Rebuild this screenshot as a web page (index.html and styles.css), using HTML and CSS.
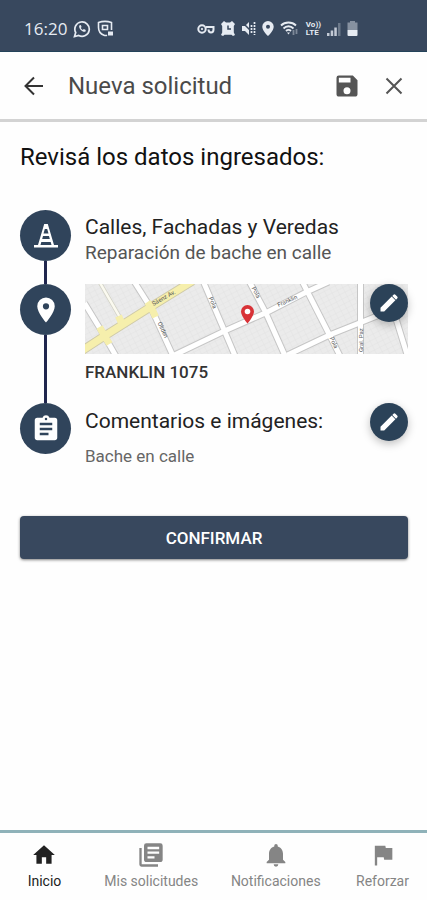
FILE: index.html
```html
<!DOCTYPE html>
<html lang="es">
<head>
<meta charset="utf-8">
<meta name="viewport" content="width=device-width, initial-scale=1">
<title>Nueva solicitud</title>
<link rel="stylesheet" href="styles.css">
</head>
<body>
<div class="status">
  <div class="status-left">
    <span class="clock">16:20</span>
    <svg width="18" height="18" viewBox="0 0 18 18" fill="none" stroke="currentColor" stroke-width="1.7"><path d="M1.5 16.5l1.2-4A7.2 7.2 0 1 1 5.700 15.500z"/><path d="M6.200 5.500c-.8 3 3.300 7 6.200 6.200l.4-1.600-2-1-1 .9c-1-.5-1.600-1.200-2-2l.8-1-.8-1.900z" fill="currentColor" stroke="none"/></svg>
    <svg width="17" height="17" viewBox="0 0 17 17" fill="none" stroke="currentColor" stroke-width="1.600"><path d="M10 15.200c-1 .4-2 .4-3 0C3 13.800 1.500 11.500 1.500 7.500V2.500C6 1 10 1 14.500 2.500V10"/><path d="M5.500 5.500h5v4h-5z"/><path d="M11 11.500h5v4h-5z" fill="currentColor" stroke="none"/></svg>
  </div>
  <div class="status-right">
    <svg width="18" height="14" viewBox="0 0 18 14" fill="none" stroke="currentColor" stroke-width="2"><circle cx="5" cy="7" r="3.700"/><path d="M9 5h7.500v2.500c0 4-5 4-5 0"/><circle cx="5" cy="7" r=".7" fill="currentColor" stroke-width="1"/></svg>
    <svg width="14" height="15" viewBox="0 0 14 15"><path d="M0 3l3-3 2 1.500h4L11 0l3 3-1.200 2v6.500L14 14l-2 1-1.500-1.200h-7L2 15l-2-1 1.200-2.500V5z" fill="currentColor"/><path d="M7 4.500v3.500h3" stroke="#38485e" stroke-width="1.500" fill="none"/></svg>
    <svg width="15" height="15" viewBox="0 0 15 15" fill="none" stroke="currentColor"><path d="M1 5h3l4-4v13l-4-4H1z" fill="currentColor" stroke="none"/><path d="M1 1l13 13" stroke="#38485e" stroke-width="1.500"/><path d="M10.500 4v8M13.500 1v13" stroke-width="1.700" stroke-dasharray="2 1"/></svg>
    <svg width="12" height="15" viewBox="0 0 12 15"><path d="M6 0a5.700 5.700 0 0 0-5.700 5.700C.3 9.800 6 15 6 15s5.700-5.200 5.700-9.300A5.700 5.700 0 0 0 6 0zm0 3.700a2 2 0 1 1 0 4 2 2 0 0 1 0-4z" fill="currentColor"/></svg>
    <svg width="20" height="15" viewBox="0 0 20 15" fill="none" stroke="currentColor" stroke-width="1.800"><path d="M1 4.500C5 .5 12 .5 16 4.500M3.500 7.500c3-3 7-3 10 0M6 10c1.500-1.500 3.500-1.500 5 0"/><path d="M7 11.500h3l-1.500 2z" fill="currentColor" stroke="none"/><path d="M13.500 9v5M16.500 8v5" opacity=".4"/></svg>
    <span class="lte"><span>Vo))</span><span>LTE</span></span>
    <svg width="14" height="14" viewBox="0 0 14 14" fill="currentColor"><path d="M0 11h2.500v3H0zM3.700 8.500h2.500V14H3.700zM7.300 5.500h2.500V14H7.300z" opacity=".8"/><path d="M11 1h2.500v13H11z" opacity=".3"/></svg>
    <svg width="11" height="15" viewBox="0 0 11 15" fill="currentColor"><path d="M3 0h5v1.500h2.500V9H.5V1.500H3z" opacity=".45"/><path d="M.5 9h10v5a1 1 0 0 1-1 1h-8a1 1 0 0 1-1-1z"/></svg>
  </div>
</div>

<header class="appbar">
  <button class="icon-btn back" aria-label="Volver"><svg width="20" height="20" viewBox="0 0 20 20" fill="none" stroke="currentColor" stroke-width="2"><path d="M19 10H2M10 1.500L1.500 10l8.500 8.500"/></svg></button>
  <h1>Nueva solicitud</h1>
  <button class="icon-btn" aria-label="Guardar"><svg width="28" height="28" viewBox="0 0 24 24" fill="currentColor"><path d="M17 3H5a2 2 0 0 0-2 2v14c0 1.100.9 2 2 2h14c1.100 0 2-.9 2-2V7l-4-4zm-5 16a3 3 0 1 1 0-6 3 3 0 0 1 0 6zm3-10H5V5h10v4z"/></svg></button>
  <button class="icon-btn" aria-label="Cerrar"><svg width="18" height="18" viewBox="0 0 18 18" fill="none" stroke="currentColor" stroke-width="2"><path d="M1.500 1.500l15 15M16.500 1.500l-15 15"/></svg></button>
</header>

<main>
  <h2>Revisá los datos ingresados:</h2>
  <ol class="steps">
    <li>
      <div class="rail"><span class="dot"><svg width="26" height="26" viewBox="0 0 26 26"><path d="M11.200 1h3.600l6.200 21h4v2.500H1V22h4z" fill="currentColor"/><path d="M11.800 6h2.400l1.300 4.500h-5zM10 13h6l.8 3H9.200zM8.300 19h9.400l.8 3h-11z" fill="#30445b"/></svg></span></div>
      <div class="info first">
        <h3>Calles, Fachadas y Veredas</h3>
        <p class="sub">Reparación de bache en calle</p>
      </div>
    </li>
    <li>
      <div class="rail"><span class="dot"><svg width="30" height="30" viewBox="0 0 24 24" fill="currentColor"><path d="M12 2a7 7 0 0 0-7 7c0 5.250 7 13 7 13s7-7.750 7-13a7 7 0 0 0-7-7zm0 9.500a2.500 2.500 0 1 1 0-5 2.500 2.500 0 0 1 0 5z"/></svg></span></div>
      <div class="info">
        <svg class="map" viewBox="0 0 324 70" preserveAspectRatio="xMidYMid slice" role="img" aria-label="Mapa">
          <defs>
            <pattern id="lots" width="6" height="5" patternUnits="userSpaceOnUse" patternTransform="rotate(-27)"><path d="M0 0h6M0 0v5" stroke="#dcdcdc" stroke-width=".6" fill="none"/></pattern>
            <g id="roads" fill="none"><path d="M0 19l17 28 15 26M50-2l17 27 22 48M119-2l21 49 11 26M165-2l16 30 20 45M218-2l27 53 11 22M276-2v74M310 30l13 42M90 71l50-24 43-19 39-20 22-10M203 71l42-20 45-18 36-15"/></g>
          </defs>
          <rect width="324" height="70" fill="#ebebeb"/>
          <rect width="324" height="70" fill="url(#lots)"/>
          <path d="M15-2l22 38" stroke="#d0d0c4" stroke-width="4" fill="none"/><path d="M15-2l22 38" stroke="#fbfaf0" stroke-width="2.500" fill="none"/>
          <use href="#roads" stroke="#c6c6c6" stroke-width="7"/>
          <path d="M-3 67l23-15 46-29 42-26" stroke="#cfcaa8" stroke-width="9" fill="none"/>
          <use href="#roads" stroke="#fff" stroke-width="5"/>
          <path d="M-3 67l23-15 46-29 42-26M15 43l5 9 5 8M63 18l4 6 4 9M34 32l3 7" stroke="#f6efac" stroke-width="7" fill="none"/>
          <g class="street"><text transform="translate(69 22) rotate(-30)">Sáenz Av.</text><text transform="translate(194 23) rotate(-24)">Franklin</text><text transform="translate(73 39) rotate(65)">Oliden</text><text transform="translate(124 14) rotate(66)">Pola</text><text transform="translate(167 4) rotate(63)">Pola</text><text transform="translate(245 54) rotate(65)">Pola</text><text transform="translate(278 68) rotate(-90)">Gral. Paz</text></g>
          <path d="M163 21a6.500 6.500 0 0 0-6.500 6.500c0 4.500 6.500 12 6.500 12s6.500-7.500 6.500-12A6.500 6.500 0 0 0 163 21z" fill="#d83237"/><circle cx="163" cy="27.500" r="2.800" fill="#fff"/>
        </svg>
        <p class="address">FRANKLIN 1075</p>
        <button class="edit" aria-label="Editar ubicación"><svg width="24" height="24" viewBox="0 0 24 24" fill="currentColor"><path d="M3.500 20.500v-3.700L14.700 5.600l3.700 3.700L7.200 20.500zM20.200 7.500a1.300 1.300 0 0 0 0-1.900l-1.800-1.800a1.300 1.300 0 0 0-1.900 0l-1.200 1.200L19 8.700z"/></svg></button>
      </div>
    </li>
    <li>
      <div class="rail"><span class="dot"><svg width="30" height="30" viewBox="0 0 24 24" fill="currentColor"><path d="M19 3h-4.200a3 3 0 0 0-5.600 0H5a2 2 0 0 0-2 2v14c0 1.100.9 2 2 2h14c1.100 0 2-.9 2-2V5a2 2 0 0 0-2-2zm-7 0a1 1 0 1 1 0 2 1 1 0 0 1 0-2zm2 14H7v-2h7v2zm3-4H7v-2h10v2zm0-4H7V7h10v2z"/></svg></span></div>
      <div class="info comments">
        <h3>Comentarios e imágenes:</h3>
        <p class="note">Bache en calle</p>
        <button class="edit" aria-label="Editar comentarios"><svg width="24" height="24" viewBox="0 0 24 24" fill="currentColor"><path d="M3.500 20.500v-3.700L14.700 5.600l3.700 3.700L7.200 20.500zM20.200 7.500a1.300 1.300 0 0 0 0-1.900l-1.800-1.800a1.300 1.300 0 0 0-1.900 0l-1.200 1.200L19 8.700z"/></svg></button>
      </div>
    </li>
  </ol>
  <button class="confirm">CONFIRMAR</button>
</main>

<nav class="tabs">
  <a class="active" href="#inicio"><svg width="26" height="26" viewBox="0 0 24 24" fill="currentColor"><path d="M10 20v-6h4v6h5v-8h3L12 3 2 12h3v8z"/></svg>Inicio</a>
  <a href="#solicitudes"><svg width="28" height="28" viewBox="0 0 24 24" fill="currentColor"><path d="M4 6H2v14c0 1.100.9 2 2 2h14v-2H4V6zm16-4H8a2 2 0 0 0-2 2v12c0 1.100.9 2 2 2h12c1.100 0 2-.9 2-2V4a2 2 0 0 0-2-2zm-1 9H9V9h10v2zm-4 4H9v-2h6v2zm4-8H9V5h10v2z"/></svg>Mis solicitudes</a>
  <a href="#notificaciones"><svg width="28" height="28" viewBox="0 0 24 24" fill="currentColor"><path d="M12 22a2 2 0 0 0 2-2h-4a2 2 0 0 0 2 2zm6-6v-5c0-3.070-1.640-5.640-4.500-6.320V4a1.500 1.500 0 0 0-3 0v.68C7.630 5.360 6 7.920 6 11v5l-2 2v1h16v-1l-2-2z"/></svg>Notificaciones</a>
  <a href="#reforzar"><svg width="28" height="28" viewBox="0 0 24 24" fill="currentColor"><path d="M14.400 6L14 4H5v17h2v-7h5.600l.4 2h7V6z"/></svg>Reforzar</a>
</nav>
</body>
</html>
```
FILE: styles.css
```css
* { box-sizing: border-box; margin: 0; padding: 0; }
body {
  min-height: 100vh;
  display: flex;
  flex-direction: column;
  background: #fefefe;
  color: #222;
  font-family: Roboto, "Liberation Sans", sans-serif;
}
svg { display: block; flex: none; }
button { border: 0; background: none; font: inherit; color: inherit; cursor: pointer; }

.status {
  height: 52px;
  padding: 6px 69px 0 24px;
  display: flex;
  align-items: center;
  justify-content: space-between;
  background: #38485e;
  border-bottom: 1px solid #24435a;
  color: #e6ebf2;
}
.status-left, .status-right { display: flex; align-items: center; gap: 6px; }
.clock { font-family: "Open Sans", sans-serif; font-size: 17px; font-weight: 500; }
.lte { display: grid; font-size: 8px; line-height: 8px; font-weight: 700; }

.appbar {
  height: 70px;
  padding: 0 24px;
  display: flex;
  align-items: center;
  gap: 24px;
  border-bottom: 3px solid #d3d3d3;
  color: #555;
}
.appbar h1 { flex: 1; font-size: 24px; line-height: 32px; font-weight: 400; color: #4a4a4a; }
.icon-btn { display: flex; }
.back { color: #333; }

main { flex: 1; padding: 20px 19px 20px 20px; }
h2 { font-size: 24px; line-height: 30px; font-weight: 400; color: #111; }

.steps { margin-top: 38px; list-style: none; }
.steps li { display: grid; grid-template-columns: 51px 1fr; column-gap: 14px; }
.rail { display: flex; flex-direction: column; align-items: center; }
.rail::after { content: ""; flex: 1; width: 3px; background: #20264e; }
li:last-child .rail::after { display: none; }
.dot {
  width: 51px;
  height: 51px;
  flex: none;
  display: grid;
  place-items: center;
  border-radius: 50%;
  background: #30445b;
  color: #fff;
}
.info { position: relative; }
.first { padding: 4px 0 18px; }
h3 { font-size: 21px; line-height: 26px; font-weight: 400; color: #222; }
.sub { font-size: 19px; line-height: 26px; color: #555; }
.map { width: 100%; height: 70px; }
.street { font-size: 6px; fill: #555; }
.address { padding: 6px 0 19px; font-size: 17px; line-height: 24px; font-weight: 500; color: #333; }
.comments { padding-top: 5px; }
.note { margin-top: 10px; font-size: 17px; line-height: 24px; color: #666; }
.edit {
  position: absolute;
  top: 0;
  right: 0;
  width: 38px;
  height: 38px;
  display: grid;
  place-items: center;
  border-radius: 50%;
  background: #2b4258;
  color: #fff;
  box-shadow: 0 3px 8px rgba(0, 0, 0, .25);
}
.confirm {
  width: 100%;
  height: 43px;
  margin-top: 48px;
  border-radius: 4px;
  background: #38485e;
  color: #fff;
  font-size: 17px;
  line-height: 24px;
  font-weight: 500;
  box-shadow: 0 1px 3px rgba(0, 0, 0, .5);
}

.tabs {
  height: 70px;
  padding-top: 8px;
  display: grid;
  grid-template-columns: 5fr 7fr 7fr 5fr;
  border-top: 3px solid #8fb2b9;
}
.tabs a {
  display: grid;
  grid-template-rows: 28px 20px;
  row-gap: 2px;
  place-items: center;
  align-content: start;
  font-size: 14px;
  line-height: 20px;
  color: #858585;
  text-decoration: none;
}
.tabs .active { color: #222; }
```
